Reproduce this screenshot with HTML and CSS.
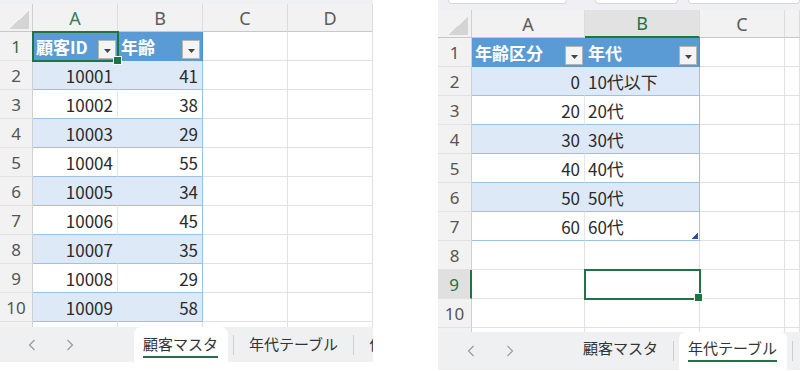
FILE: index.html
```html
<!DOCTYPE html>
<html lang="ja">
<head>
    <meta charset="UTF-8">
    <meta name="viewport" content="width=device-width, initial-scale=1.0">
    <title>顧客マスタ / 年代テーブル</title>
    <link rel="stylesheet" href="styles.css">
</head>
<body>
<div class="shots">

    <!-- 左: 顧客マスタ -->
    <section class="book book-left">
        <div class="ribbon-edge"></div>
        <div class="sheet sheet-left">
            <div class="corner"></div>
            <div class="colhead is-current">A</div>
            <div class="colhead">B</div>
            <div class="colhead">C</div>
            <div class="colhead">D</div>

            <div class="rowhead is-current">1</div>
            <div class="thead sel">顧客ID<span class="filter"><svg width="7" height="4" viewBox="0 0 7 4"><path d="M0 0h7L3.5 4z" fill="#444"/></svg></span></div>
            <div class="thead z">年齢<span class="filter"><svg width="7" height="4" viewBox="0 0 7 4"><path d="M0 0h7L3.5 4z" fill="#444"/></svg></span></div>
            <div class="cell"></div><div class="cell"></div>

            <div class="rowhead">2</div>
            <div class="t a num band">10001</div><div class="t z num band">41</div>
            <div class="cell"></div><div class="cell"></div>

            <div class="rowhead">3</div>
            <div class="t a num">10002</div><div class="t z num">38</div>
            <div class="cell"></div><div class="cell"></div>

            <div class="rowhead">4</div>
            <div class="t a num band">10003</div><div class="t z num band">29</div>
            <div class="cell"></div><div class="cell"></div>

            <div class="rowhead">5</div>
            <div class="t a num">10004</div><div class="t z num">55</div>
            <div class="cell"></div><div class="cell"></div>

            <div class="rowhead">6</div>
            <div class="t a num band">10005</div><div class="t z num band">34</div>
            <div class="cell"></div><div class="cell"></div>

            <div class="rowhead">7</div>
            <div class="t a num">10006</div><div class="t z num">45</div>
            <div class="cell"></div><div class="cell"></div>

            <div class="rowhead">8</div>
            <div class="t a num band">10007</div><div class="t z num band">35</div>
            <div class="cell"></div><div class="cell"></div>

            <div class="rowhead">9</div>
            <div class="t a num">10008</div><div class="t z num">29</div>
            <div class="cell"></div><div class="cell"></div>

            <div class="rowhead">10</div>
            <div class="t a num band">10009</div><div class="t z num band">58</div>
            <div class="cell"></div><div class="cell"></div>

            <div class="rowhead tail"></div>
            <div class="cell tail"></div><div class="cell tail"></div>
            <div class="cell tail"></div><div class="cell tail"></div>
        </div>
        <div class="tabbar">
            <span class="nav"><svg width="8" height="12" viewBox="0 0 8 12"><polyline points="6.5,1 1.5,6 6.5,11" fill="none" stroke="#9a9a9a" stroke-width="1.2"/></svg></span>
            <span class="nav"><svg width="8" height="12" viewBox="0 0 8 12"><polyline points="1.5,1 6.5,6 1.5,11" fill="none" stroke="#9a9a9a" stroke-width="1.2"/></svg></span>
            <span class="tab is-active first"><span class="tab-label">顧客マスタ</span></span>
            <span class="tab-sep"></span>
            <span class="tab"><span class="tab-label">年代テーブル</span></span>
            <span class="tab-sep"></span>
            <span class="tab"><span class="tab-label">作業用</span></span>
        </div>
    </section>

    <!-- 右: 年代テーブル -->
    <section class="book book-right">
        <div class="ribbon-edge">
            <span class="box box-name"></span>
            <span class="box box-fx"></span>
            <span class="box box-formula"></span>
        </div>
        <div class="sheet sheet-right">
            <div class="corner"></div>
            <div class="colhead">A</div>
            <div class="colhead is-active">B</div>
            <div class="colhead">C</div>
            <div class="colhead"></div>

            <div class="rowhead">1</div>
            <div class="thead">年齢区分<span class="filter"><svg width="7" height="4" viewBox="0 0 7 4"><path d="M0 0h7L3.5 4z" fill="#444"/></svg></span></div>
            <div class="thead z">年代<span class="filter"><svg width="7" height="4" viewBox="0 0 7 4"><path d="M0 0h7L3.5 4z" fill="#444"/></svg></span></div>
            <div class="cell"></div><div class="cell"></div>

            <div class="rowhead">2</div>
            <div class="t a num band">0</div><div class="t z txt band">10代以下</div>
            <div class="cell"></div><div class="cell"></div>

            <div class="rowhead">3</div>
            <div class="t a num">20</div><div class="t z txt">20代</div>
            <div class="cell"></div><div class="cell"></div>

            <div class="rowhead">4</div>
            <div class="t a num band">30</div><div class="t z txt band">30代</div>
            <div class="cell"></div><div class="cell"></div>

            <div class="rowhead">5</div>
            <div class="t a num">40</div><div class="t z txt">40代</div>
            <div class="cell"></div><div class="cell"></div>

            <div class="rowhead">6</div>
            <div class="t a num band">50</div><div class="t z txt band">50代</div>
            <div class="cell"></div><div class="cell"></div>

            <div class="rowhead">7</div>
            <div class="t a num">60</div><div class="t z txt grip">60代</div>
            <div class="cell"></div><div class="cell"></div>

            <div class="rowhead">8</div>
            <div class="cell"></div><div class="cell"></div>
            <div class="cell"></div><div class="cell"></div>

            <div class="rowhead is-active">9</div>
            <div class="cell"></div><div class="cell sel"></div>
            <div class="cell"></div><div class="cell"></div>

            <div class="rowhead">10</div>
            <div class="cell"></div><div class="cell"></div>
            <div class="cell"></div><div class="cell"></div>

            <div class="rowhead tail"></div>
            <div class="cell tail"></div><div class="cell tail"></div>
            <div class="cell tail"></div><div class="cell tail"></div>
        </div>
        <div class="tabbar">
            <span class="nav"><svg width="8" height="12" viewBox="0 0 8 12"><polyline points="6.5,1 1.5,6 6.5,11" fill="none" stroke="#9a9a9a" stroke-width="1.2"/></svg></span>
            <span class="nav"><svg width="8" height="12" viewBox="0 0 8 12"><polyline points="1.5,1 6.5,6 1.5,11" fill="none" stroke="#9a9a9a" stroke-width="1.2"/></svg></span>
            <span class="tab first"><span class="tab-label">顧客マスタ</span></span>
            <span class="tab-sep"></span>
            <span class="tab is-active"><span class="tab-label">年代テーブル</span></span>
            <span class="tab-sep"></span>
        </div>
    </section>

</div>
</body>
</html>
```

FILE: styles.css
```css
/* --- 初期化 --- */
* {
    box-sizing: border-box;
    margin: 0;
    padding: 0;
}

body {
    background: #fff;
    font-family: "Noto Sans CJK JP", "Noto Sans", sans-serif;
    color: #2b2b2b;
}

/* --- 2枚のスクリーンショットを横並び --- */
.shots {
    display: flex;
    gap: 65px;
    width: 800px;
    height: 371px;
    overflow: hidden;
}

.book {
    display: flex;
    flex-direction: column;
    flex-shrink: 0;
    overflow: hidden;
}

.book-left  { width: 373px; }
.book-right { width: 362px; }

/* --- 上端 (数式バーの下端) --- */
.ribbon-edge {
    background: #eef0f3;
    display: flex;
    align-items: flex-start;
}

.book-left .ribbon-edge  { height: 4px; }
.book-right .ribbon-edge { height: 10px; }

.box {
    height: 4px;
    background: #fff;
    border: 1px solid #d8d8d8;
    border-top: none;
    border-radius: 0 0 4px 4px;
}

.box-name    { width: 119px; margin-left: 10px; }
.box-fx      { width: 83px; margin-left: 28px; }
.box-formula { flex: 1; margin-left: 10px; }

/* --- シートのグリッド --- */
.sheet {
    display: grid;
    font-size: 17px;
}

.sheet-left {
    grid-template-columns: 33px repeat(4, 85px);
    grid-template-rows: 28px repeat(10, 29px) 5px;
}

.sheet-right {
    grid-template-columns: 34px 113px 115px 85px 15px;
    grid-template-rows: 28px repeat(10, 29px) 4px;
}

.sheet > div {
    display: flex;
    align-items: center;
    line-height: 1;
    white-space: nowrap;
    overflow: hidden;
}

/* 左上の三角 */
.corner {
    background: #f2f2f2 linear-gradient(to bottom right, transparent 50%, #d4d4d4 50%) no-repeat right 3px bottom 2px / 20px 18px;
    border-right: 1px solid #d0d0d0;
    border-bottom: 1px solid #c8c8c8;
}

/* 列見出し */
.colhead {
    justify-content: center;
    background: #f2f2f2;
    border-right: 1px solid #dcdcdc;
    border-bottom: 1px solid #c8c8c8;
    color: #5c5c5c;
    font-family: "Noto Sans", sans-serif;
    font-size: 18px;
}

.colhead.is-current { color: #3f7d58; }

.colhead.is-active {
    background: #e2e2e2;
    color: #217346;
    border-bottom: 2px solid #217346;
}

/* 行見出し */
.rowhead {
    justify-content: center;
    background: #f2f2f2;
    border-right: 1px solid #d0d0d0;
    border-bottom: 1px solid #e1e1e1;
    color: #555;
    font-family: "Noto Sans", sans-serif;
    font-size: 17px;
}

.rowhead.is-current { color: #217346; }

.rowhead.is-active {
    background: #e0e0e0;
    color: #217346;
    border-right: 2px solid #217346;
}

/* 通常セル */
.cell {
    border-right: 1px solid #e1e1e1;
    border-bottom: 1px solid #e1e1e1;
}

.tail { border-bottom: none; }

/* --- テーブル --- */
.thead {
    justify-content: space-between;
    background: #5b9bd5;
    color: #fff;
    font-weight: 700;
    padding: 0 2px 0 3px;
}

.thead.z { border-right: 1px solid #4f8fcb; }

.filter {
    align-self: flex-end;
    margin-bottom: 2px;
    width: 18px;
    height: 19px;
    display: flex;
    align-items: center;
    justify-content: center;
    padding-top: 2px;
    background: #f4f4f4;
    border: 1px solid #b4b4b4;
}

.t {
    background: #fff;
    border-bottom: 1px solid #9bc2e6;
}

.t.band { background: #dde9f7; }

.t.a { border-right: 1px solid #e6e6e6; }
.t.a.band { border-right-color: transparent; }
.t.z { border-right: 1px solid #9bc2e6; }

.num {
    justify-content: flex-end;
    padding-right: 4px;
}

.txt { padding-left: 3px; }

/* テーブル右下のサイズ変更ハンドル */
.sheet > .grip {
    position: relative;
}

.grip::after {
    content: "";
    position: absolute;
    right: 1px;
    bottom: 1px;
    width: 6px;
    height: 6px;
    background: linear-gradient(to bottom right, transparent 45%, #2f4f9f 45%);
}

/* 選択セル */
.sheet > .sel {
    position: relative;
    z-index: 2;
    overflow: visible;
    outline: 2px solid #217346;
    outline-offset: -1px;
}

.sel::after {
    content: "";
    position: absolute;
    right: -4px;
    bottom: -4px;
    width: 7px;
    height: 7px;
    background: #217346;
    border: 1px solid #fff;
}

/* --- シート見出しタブ --- */
.tabbar {
    display: flex;
    align-items: stretch;
    background: #eef0f2;
    overflow: hidden;
}

.tabbar > * { flex-shrink: 0; }

.book-left .tabbar {
    height: 35px;
    padding-left: 26px;
}

.book-right .tabbar {
    height: 38px;
    padding-left: 27px;
}

.nav {
    width: 12px;
    display: flex;
    align-items: center;
    justify-content: center;
}

.nav + .nav { margin-left: 26px; }
.book-right .nav + .nav { margin-left: 27px; }

.tab {
    display: flex;
    align-items: flex-start;
    padding: 9px 10px 0 10px;
    font-size: 15px;
    color: #333;
    white-space: nowrap;
}

.book-right .tab { padding-top: 8px; }

.tab.first { margin-left: 58px; }
.book-right .tab.first { margin-left: 57px; }

.tab.is-active {
    background: #fff;
    border-radius: 7px 7px 0 0;
    padding-left: 9px;
}

.tab-label {
    line-height: 1;
    padding-bottom: 5px;
    border-bottom: 2px solid transparent;
}

.tab.is-active .tab-label { border-bottom-color: #217346; }

.tab-sep {
    align-self: center;
    width: 1px;
    height: 20px;
    margin: 0 5px;
    background: #cdcdcd;
}
```
